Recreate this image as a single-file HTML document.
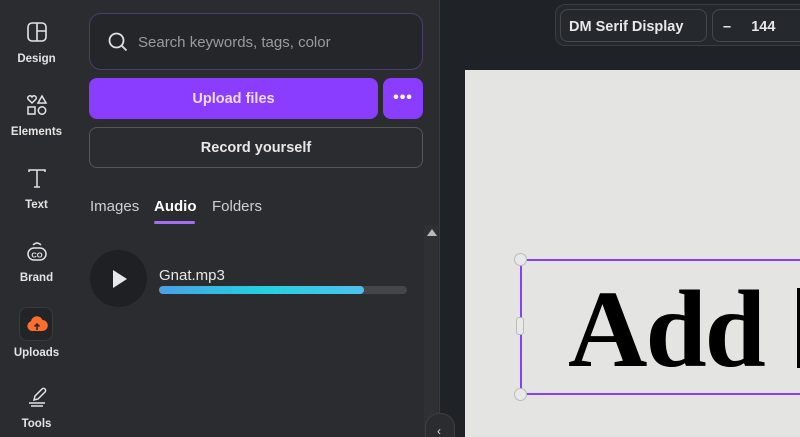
<!DOCTYPE html>
<html style="width:800px;height:437px;overflow:hidden"><head><meta charset="utf-8"><style>
*{box-sizing:border-box;margin:0;padding:0}
body{width:800px;height:437px;overflow:hidden;background:#1f2226;font-family:"Liberation Sans",sans-serif;position:relative}
.side{position:absolute;left:0;top:0;width:73px;height:437px;background:#2b2c2f}
.it{position:absolute;left:0;width:73px;text-align:center;color:#e4e4e4;font-size:11.5px;font-weight:bold}
.it svg{display:block;margin:0 auto 10px}
.panel{position:absolute;left:73px;top:0;width:367px;height:437px;background:#2b2c2f;border-right:1px solid #3a3b3e}
.search{position:absolute;left:16px;top:13px;width:334px;height:57px;border:1px solid #4b3d70;border-radius:12px;background:#252629}
.search span{position:absolute;left:48px;top:20px;color:#9a9b9e;font-size:15px}
.up{position:absolute;left:16px;top:78px;width:289px;height:41px;background:#8b3dff;border-radius:8px;color:#eadcff;font-weight:bold;font-size:14.5px;text-align:center;line-height:43px}
.more{position:absolute;left:310px;top:78px;width:40px;height:41px;background:#8b3dff;border-radius:8px;color:#fff;text-align:center;line-height:40px;font-size:16px;font-weight:bold;letter-spacing:1px}
.rec{position:absolute;left:16px;top:127px;width:334px;height:41px;border:1px solid #55565a;border-radius:8px;color:#e8e8e8;font-weight:bold;font-size:14.5px;text-align:center;line-height:41px}
.tab{position:absolute;top:198px;font-size:15px;color:#d0d0d2}
.canvas{position:absolute;left:465px;top:70px;width:335px;height:367px;background:#e4e4e3}
.tb{position:absolute;left:555px;top:4px;width:260px;height:42px;border:1px solid #3a3d42;border-radius:10px;background:#25282c}
.box{position:absolute;top:4px;height:33px;border:1px solid #45484d;border-radius:8px;color:#e8e8e8;font-weight:bold;font-size:14.5px;line-height:35px}
</style></head><body>
<div class="side">
 <div class="it" style="top:21px"><svg width="22" height="22" viewBox="0 0 22 22" fill="none" stroke="#e4e4e4" stroke-width="1.6"><rect x="2" y="2" width="18" height="18" rx="4"/><path d="M11 2v18M11 10h9"/></svg>Design</div>
 <div class="it" style="top:94px"><svg width="22" height="22" viewBox="0 0 22 22" fill="none" stroke="#e4e4e4" stroke-width="1.5"><path d="M6 9l-4-4a2 2 0 0 1 4-2 2 2 0 0 1 4 2z"/><path d="M16 2l4 7h-8z"/><rect x="2" y="13" width="7" height="7"/><circle cx="16" cy="16.5" r="3.7"/></svg>Elements</div>
 <div class="it" style="top:167px"><svg width="22" height="22" viewBox="0 0 22 22" fill="none" stroke="#e4e4e4" stroke-width="1.5"><path d="M3 5V3h16v2M11 3v17M8 20h6"/></svg>Text</div>
 <div class="it" style="top:240px"><svg width="22" height="22" viewBox="0 0 22 22" fill="none" stroke="#e4e4e4" stroke-width="1.5"><path d="M7 5q4-4 8 0"/><rect x="2" y="8" width="18" height="12" rx="6"/><text x="11" y="17.5" font-size="7.5" text-anchor="middle" fill="#e4e4e4" stroke="none" font-family="Liberation Sans" font-weight="bold">CO</text></svg>Brand</div>
 <div style="position:absolute;left:19px;top:307px;width:34px;height:34px;border-radius:8px;background:#232427;border:1px solid #3a3b3e"></div>
 <div class="it" style="top:313px"><svg width="22" height="22" viewBox="0 0 22 22" style="margin-bottom:12px"><path d="M6 18a5 5 0 0 1-1-9.8A6 6 0 0 1 16.5 7 5 5 0 0 1 16 18z" fill="#ff6d2d"/><path d="M11 17v-6M8.5 13.5L11 11l2.5 2.5" stroke="#2b2c2f" stroke-width="1.6" fill="none"/></svg>Uploads</div>
 <div class="it" style="top:386px"><svg width="22" height="22" viewBox="0 0 22 22" fill="none" stroke="#e4e4e4" stroke-width="1.5"><path d="M8 14l1-4 7-7a2 2 0 0 1 3 3l-7 7z"/><path d="M3 17h16M5 20h12"/></svg>Tools</div>
</div>
<div class="panel">
 <div class="search"><svg style="position:absolute;left:17px;top:17px" width="22" height="22" viewBox="0 0 22 22" fill="none" stroke="#e0e0e0" stroke-width="1.8"><circle cx="9.5" cy="9.5" r="7"/><path d="M14.5 14.5l5 5"/></svg><span>Search keywords, tags, color</span></div>
 <div class="up">Upload files</div>
 <div class="more">•••</div>
 <div class="rec">Record yourself</div>
 <div class="tab" style="left:17px">Images</div>
 <div class="tab" style="left:81px;font-weight:bold;color:#fff">Audio</div>
 <div style="position:absolute;left:81px;top:221px;width:41px;height:3px;border-radius:2px;background:#a070f0"></div>
 <div class="tab" style="left:139px">Folders</div>
 <div style="position:absolute;left:351px;top:225px;width:14px;height:212px;background:#2f3033"></div>
 <div style="position:absolute;left:354px;top:229px;width:0;height:0;border-left:5px solid transparent;border-right:5px solid transparent;border-bottom:7px solid #bbb"></div>
 <div style="position:absolute;left:17px;top:250px;width:57px;height:57px;border-radius:50%;background:#1f2023"></div>
 <div style="position:absolute;left:40px;top:270px;width:0;height:0;border-top:9px solid transparent;border-bottom:9px solid transparent;border-left:14px solid #e8e8e8"></div>
 <div style="position:absolute;left:86px;top:267px;color:#e8e8e8;font-size:15px">Gnat.mp3</div>
 <div style="position:absolute;left:86px;top:286px;width:248px;height:8px;border-radius:4px;background:#45464a"></div>
 <div style="position:absolute;left:86px;top:286px;width:205px;height:8px;border-radius:4px;background:linear-gradient(90deg,#4aa0e6,#25d0e0,#4fc0ee)"></div>
</div>
<div style="position:absolute;left:425px;top:413px;width:30px;height:24px;border-radius:14px 14px 0 0;background:#2b2c2f;border:1px solid #3d3e42;border-bottom:none"></div>
<div style="position:absolute;left:437px;top:424px;color:#ddd;font-size:12px">‹</div>
<div class="tb">
 <div class="box" style="left:4px;width:147px;padding-left:8px">DM Serif Display</div>
 <div class="box" style="left:156px;width:110px;padding-left:10px">–&nbsp;&nbsp;&nbsp;&nbsp;&nbsp;144</div>
</div>
<div class="canvas"></div>
<div style="position:absolute;left:520px;top:259px;width:280px;height:136px;border:2px solid #8b3dff;border-right:none"></div>
<div style="position:absolute;left:514px;top:253px;width:13px;height:13px;border-radius:50%;background:#e8e8e8;border:1px solid #bbb"></div>
<div style="position:absolute;left:514px;top:388px;width:13px;height:13px;border-radius:50%;background:#e8e8e8;border:1px solid #bbb"></div>
<div style="position:absolute;left:516px;top:317px;width:8px;height:18px;border-radius:3px;background:#e8e8e8;border:1px solid #bbb"></div>
<div style="position:absolute;left:568px;top:264px;width:232px;overflow:hidden;font-family:'Liberation Serif',serif;font-weight:bold;font-size:110px;color:#000;line-height:130px;letter-spacing:-2px;white-space:nowrap">Add</div>
<div style="position:absolute;left:797px;top:288px;width:3px;height:80px;background:#000"></div>
</body></html>
